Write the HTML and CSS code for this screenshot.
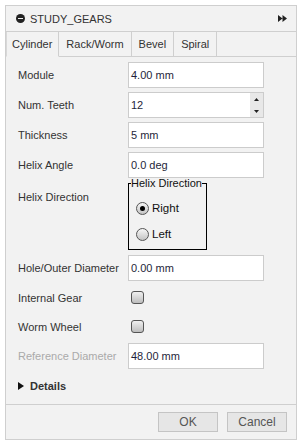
FILE: index.html
```html
<!DOCTYPE html>
<html>
<head>
<meta charset="utf-8">
<link rel="stylesheet" href="styles.css">
</head>
<body>
<div class="panel">
  <div class="header">
    <span class="hicon"></span>
    <span class="title">STUDY_GEARS</span>
    <svg class="ff" width="9" height="7" viewBox="0 0 9 7"><path d="M0 0 L4.5 3.5 L0 7 Z M4.5 0 L9 3.5 L4.5 7 Z" fill="#222"/></svg>
  </div>
  <div class="tabs">
    <div class="tab active">Cylinder</div>
    <div class="tab">Rack/Worm</div>
    <div class="tab">Bevel</div>
    <div class="tab">Spiral</div>
    <div class="tabfill"></div>
  </div>
  <div class="content">
    <div class="row"><span class="label">Module</span><div class="input">4.00 mm</div></div>
    <div class="row"><span class="label">Num. Teeth</span><div class="input spin"><span>12</span><div class="arrows"><div class="arr"><svg width="5" height="3" viewBox="0 0 5 3"><path d="M2.5 0 L5 3 L0 3 Z" fill="#222"/></svg></div><div class="arr"><svg width="5" height="3" viewBox="0 0 5 3"><path d="M0 0 L5 0 L2.5 3 Z" fill="#222"/></svg></div></div></div></div>
    <div class="row"><span class="label">Thickness</span><div class="input">5 mm</div></div>
    <div class="row"><span class="label">Helix Angle</span><div class="input">0.0 deg</div></div>
    <div class="grouprow">
      <span class="label glabel">Helix Direction</span>
      <div class="group">
        <span class="gtitle">Helix Direction</span>
        <div class="radio"><span class="rb on"></span>Right</div>
        <div class="radio"><span class="rb"></span>Left</div>
      </div>
    </div>
    <div class="row"><span class="label">Hole/Outer Diameter</span><div class="input">0.00 mm</div></div>
    <div class="row chk"><span class="label">Internal Gear</span><span class="cb"></span></div>
    <div class="row chk"><span class="label">Worm Wheel</span><span class="cb"></span></div>
    <div class="row"><span class="label dis">Reference Diameter</span><div class="input">48.00 mm</div></div>
    <div class="details"><span class="tri"></span>Details</div>
  </div>
  <div class="footer">
    <div class="btn">OK</div>
    <div class="btn">Cancel</div>
  </div>
</div>
</body>
</html>
```
FILE: styles.css
```css
html, body { margin: 0; padding: 0; background: #fff; }
body {
  font-family: "Liberation Sans", Arial, sans-serif;
  font-size: 11px;
  color: #333;
  padding: 5px;
  width: 301px;
  box-sizing: border-box;
}
.panel {
  width: 292px;
  height: 435px;
  box-sizing: border-box;
  background: #f2f2f2;
  border: 1px solid #cfcfcf;
  display: flex;
  flex-direction: column;
}
.header {
  height: 25px;
  border-bottom: 1px solid #cfcfcf;
  display: flex;
  align-items: center;
  padding-left: 10px;
  padding-right: 9px;
}
.hicon {
  width: 9px; height: 9px; border-radius: 50%;
  background: #222; position: relative; margin-right: 5px;
}
.hicon::after {
  content: ""; position: absolute; left: 2px; top: 4px; width: 5px; height: 1px; background: #f2f2f2;
}
.title { color: #333; }
.ff { margin-left: auto; }
.tabs {
  display: flex; height: 25px;
}
.tab {
  padding: 0 7px;
  display: flex; align-items: center;
  border-right: 1px solid #cfcfcf;
  border-bottom: 1px solid #cfcfcf;
  color: #333;
}
.tab.active { border-bottom-color: transparent; border-left: 1px solid #d8d8d8; padding: 0 6px 0 5px; }
.tabfill { flex: 1; border-bottom: 1px solid #cfcfcf; }
.content {
  padding: 5px 0 0 12px;
  flex: 1;
  display: flex; flex-direction: column;
}
.row {
  display: flex; align-items: center; height: 26px; margin-bottom: 4px;
}
.label { width: 110px; color: #333; }
.label.dis { color: #aaa; }
.input {
  width: 136px; height: 26px; box-sizing: border-box;
  border: 1px solid #ccc; background: #fff;
  display: flex; align-items: center; padding-left: 2px;
  color: #1f1f3a;
}
.spin { position: relative; }
.arrows {
  position: absolute; right: 0; top: 0; width: 13px; height: 24px;
  display: flex; flex-direction: column;
}
.arr { flex: 1; background: #e8e8e8; display: flex; align-items: center; justify-content: center; }
.grouprow { display: flex; margin-bottom: 5px; margin-top: 1px; }
.glabel { padding-top: 8px; }
.group {
  position: relative;
  width: 79px; height: 67px; box-sizing: border-box;
  border: 1px solid #000; border-top: none;
  padding: 12px 0 0 7px;
}
.group::before {
  content: ""; position: absolute; left: 0; top: 0; width: 2px; border-top: 1px solid #000;
}
.group::after {
  content: ""; position: absolute; right: 0; top: 0; width: 4px; border-top: 1px solid #000;
}
.gtitle { position: absolute; left: 2px; top: -6px; color: #111; }
.radio { display: flex; align-items: center; height: 26px; color: #111; font-size: 11.5px; }
.rb {
  width: 13px; height: 13px; border-radius: 50%; box-sizing: border-box;
  border: 1px solid #555; background: linear-gradient(#f6f6f6, #c4c4c4);
  margin-right: 3px; position: relative;
}
.rb.on::after {
  content: ""; position: absolute; left: 3px; top: 3px; width: 5px; height: 5px; border-radius: 50%; background: #000;
}
.chk { height: 25px; }
.cb {
  width: 13px; height: 13px; border-radius: 3px; box-sizing: border-box; margin-left: 3px;
  border: 1px solid #555; background: linear-gradient(#f0f0f0, #bdbdbd);
}
.details {
  display: flex; align-items: center; font-weight: bold; color: #333; height: 22px; margin-top: 2px;
}
.tri {
  width: 0; height: 0; border-top: 4px solid transparent; border-bottom: 4px solid transparent;
  border-left: 6px solid #111; margin-right: 6px; margin-left: 0;
}
.footer {
  border-top: 1px solid #cfcfcf;
  height: 35px; box-sizing: border-box;
  display: flex; justify-content: flex-end; align-items: center;
  padding-right: 9px; gap: 9px;
}
.btn {
  width: 60px; height: 20px; box-sizing: border-box;
  border: 1px solid #c4c4c4; background: #e6e6e6;
  display: flex; align-items: center; justify-content: center;
  color: #555; font-size: 12px;
}
```
